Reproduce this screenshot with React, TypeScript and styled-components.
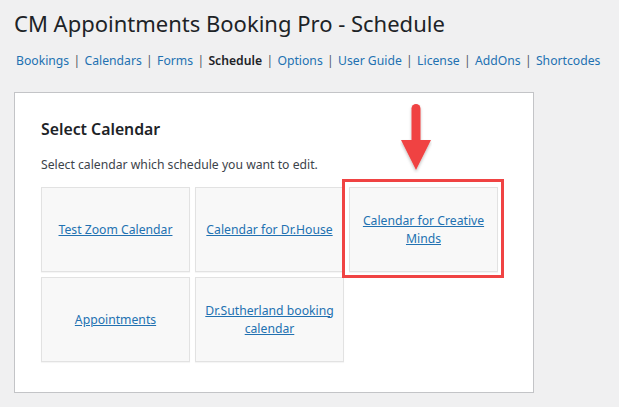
import styled, { createGlobalStyle } from 'styled-components'

const GlobalStyle = createGlobalStyle`
  body {
    margin: 0;
    background: #f0f0f1;
    font-family: "Noto Sans", "Open Sans", sans-serif;
    color: #1d2327;
  }
`

const navItems = ['Bookings', 'Calendars', 'Forms', 'Schedule', 'Options', 'User Guide', 'License', 'AddOns', 'Shortcodes']

const calendars = [
  'Test Zoom Calendar',
  'Calendar for Dr.House',
  'Calendar for Creative Minds',
  'Appointments',
  'Dr.Sutherland booking calendar',
]

const App = () => {
  return (
    <Page>
      <GlobalStyle />
      <Title>CM Appointments Booking Pro - Schedule</Title>
      <Nav>
        {navItems.map((item, i) => (
          <NavItem key={item}>
            {item === 'Schedule' ? <Current>{item}</Current> : <NavLink href="#">{item}</NavLink>}
            {i < navItems.length - 1 && <Sep>|</Sep>}
          </NavItem>
        ))}
      </Nav>
      <Panel>
        <Heading>Select Calendar</Heading>
        <Hint>Select calendar which schedule you want to edit.</Hint>
        <Grid>
          {calendars.map((c) => (
            <Tile key={c}>
              <TileLink href="#">{c}</TileLink>
            </Tile>
          ))}
        </Grid>
        <Arrow width="32" height="70" viewBox="0 0 32 70">
          <defs>
            <filter id="sh" x="-50%" y="-20%" width="200%" height="150%">
              <feDropShadow dx="0" dy="2" stdDeviation="1.5" floodColor="#000" floodOpacity="0.25" />
            </filter>
          </defs>
          <g filter="url(#sh)" fill="#f04343">
            <rect x="11.5" y="1" width="9" height="42" rx="4.5" />
            <polygon points="1,37 31,37 16,67" />
          </g>
        </Arrow>
        <Highlight />
      </Panel>
    </Page>
  )
}

export default App

const Page = styled.div`
  padding: 9px 0 0 14px;
  width: 619px;
  height: 407px;
  box-sizing: border-box;
  overflow: hidden;
`

const Title = styled.h1`
  margin: 0;
  font-size: 22px;
  font-weight: 400;
  line-height: 28px;
  color: #1d2327;
`

const Nav = styled.div`
  margin: 15px 0 0 2px;
  font-size: 12.2px;
  line-height: 18px;
  white-space: nowrap;
`

const NavItem = styled.span``

const NavLink = styled.a`
  color: #2271b1;
  text-decoration: none;
`

const Current = styled.span`
  font-weight: 600;
  color: #1d2327;
`

const Sep = styled.span`
  color: #50575e;
  margin: 0 4.3px;
`

const Panel = styled.div`
  position: relative;
  margin-top: 22px;
  width: 520px;
  height: 301px;
  box-sizing: border-box;
  background: #fff;
  border: 1px solid #c3c4c7;
  padding: 24px 26px;
`

const Heading = styled.h2`
  margin: 0;
  font-size: 15.8px;
  font-weight: 600;
  line-height: 24px;
  color: #1d2327;
`

const Hint = styled.p`
  margin: 15px 0 0;
  font-size: 12.2px;
  line-height: 18px;
  color: #3c434a;
`

const Grid = styled.div`
  margin-top: 13px;
  display: grid;
  grid-template-columns: repeat(3, 149px);
  grid-auto-rows: 85px;
  gap: 5px 5px;
`

const Tile = styled.div`
  display: flex;
  align-items: center;
  justify-content: center;
  text-align: center;
  padding: 0 9px;
  background: #f8f8f8;
  border: 1px solid #e2e2e2;
  box-shadow: 0 1px 1px rgba(0, 0, 0, 0.04);
`

const TileLink = styled.a`
  font-size: 12.2px;
  line-height: 18px;
  color: #2271b1;
  text-decoration: underline;
`

const Arrow = styled.svg`
  position: absolute;
  left: 385px;
  top: 10px;
`

const Highlight = styled.div`
  position: absolute;
  left: 327px;
  top: 86px;
  width: 162px;
  height: 99px;
  box-sizing: border-box;
  border: 3px solid #f04343;
  pointer-events: none;
`
